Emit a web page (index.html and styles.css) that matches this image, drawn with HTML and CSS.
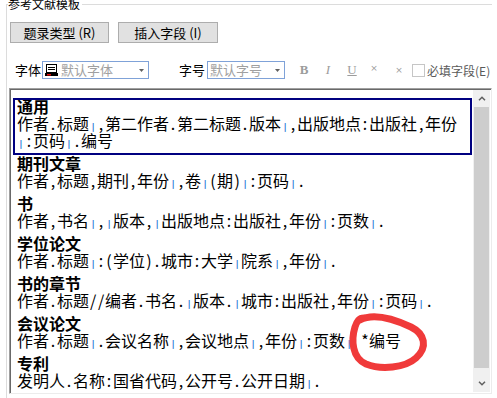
FILE: index.html
```html
<!DOCTYPE html>
<html lang="zh-CN">
<head>
<meta charset="utf-8">
<title>参考文献模板</title>
<link rel="stylesheet" href="styles.css">
</head>
<body>
<fieldset class="group">
  <legend class="group-title">参考文献模板</legend>
  <div class="actions">
    <button class="btn">题录类型 (R)</button>
    <button class="btn btn-wide">插入字段 (I)</button>
  </div>
  <div class="toolbar">
    <span class="label label-font">字体</span>
    <div class="combo combo-font">
      <svg class="combo-icon" viewBox="0 0 13 13" width="13" height="13">
        <rect x="1.5" y="0.5" width="10" height="8" fill="#fff" stroke="#000"/>
        <line x1="3" y1="3.5" x2="10" y2="3.5" stroke="#000"/>
        <line x1="3" y1="5.5" x2="10" y2="5.5" stroke="#000"/>
        <rect x="0" y="9" width="13" height="3" fill="#000"/>
        <rect x="2" y="10" width="4" height="1.5" fill="#e01010"/>
      </svg>
      <span class="combo-text">默认字体</span>
      <svg class="combo-arrow" viewBox="0 0 5 3" width="5" height="3"><path d="M0 0H5L2.5 3Z" fill="#606060"/></svg>
    </div>
    <span class="label label-size">字号</span>
    <div class="combo combo-size">
      <span class="combo-text">默认字号</span>
      <svg class="combo-arrow" viewBox="0 0 5 3" width="5" height="3"><path d="M0 0H5L2.5 3Z" fill="#606060"/></svg>
    </div>
    <span class="tool tool-bold">B</span>
    <span class="tool tool-italic">I</span>
    <span class="tool tool-under">U</span>
    <span class="tool tool-sup">×</span>
    <span class="tool tool-sub">×</span>
    <span class="check"></span>
    <span class="check-label">必填字段(E)</span>
  </div>
  <div class="list">
    <div class="entries">
      <div class="entry entry-selected">
        <div class="entry-name">通用</div>
        <div class="entry-fmt">作者<span class="p">.</span>标题<span class="s">|</span><span class="p">,</span>第二作者<span class="p">.</span>第二标题<span class="p">.</span>版本<span class="s">|</span><span class="p">,</span>出版地点<span class="p">:</span>出版社<span class="p">,</span>年份<br><span class="s">|</span><span class="p">:</span>页码<span class="s">|</span><span class="p">.</span>编号</div>
      </div>
      <div class="entry">
        <div class="entry-name">期刊文章</div>
        <div class="entry-fmt">作者<span class="p">,</span>标题<span class="p">,</span>期刊<span class="p">,</span>年份<span class="s">|</span><span class="p">,</span>卷<span class="s">|</span><span class="p">(</span>期<span class="p">)</span><span class="s">|</span><span class="p">:</span>页码<span class="s">|</span><span class="p">.</span></div>
      </div>
      <div class="entry">
        <div class="entry-name">书</div>
        <div class="entry-fmt">作者<span class="p">,</span>书名<span class="s">|</span><span class="p">,</span><span class="s">|</span>版本<span class="p">,</span><span class="s">|</span>出版地点<span class="p">:</span>出版社<span class="p">,</span>年份<span class="s">|</span><span class="p">:</span>页数<span class="s">|</span><span class="p">.</span></div>
      </div>
      <div class="entry">
        <div class="entry-name">学位论文</div>
        <div class="entry-fmt">作者<span class="p">.</span>标题<span class="s">|</span><span class="p">:</span><span class="p">(</span>学位<span class="p">)</span><span class="p">.</span>城市<span class="p">:</span>大学<span class="s">|</span>院系<span class="s">|</span><span class="p">,</span>年份<span class="s">|</span><span class="p">.</span></div>
      </div>
      <div class="entry">
        <div class="entry-name">书的章节</div>
        <div class="entry-fmt">作者<span class="p">.</span>标题<span class="p">/</span><span class="p">/</span>编者<span class="p">.</span>书名<span class="p">.</span><span class="s">|</span>版本<span class="p">.</span><span class="s">|</span>城市<span class="p">:</span>出版社<span class="p">,</span>年份<span class="s">|</span><span class="p">:</span>页码<span class="s">|</span><span class="p">.</span></div>
      </div>
      <div class="entry">
        <div class="entry-name">会议论文</div>
        <div class="entry-fmt">作者<span class="p">.</span>标题<span class="s">|</span><span class="p">.</span>会议名称<span class="s">|</span><span class="p">,</span>会议地点<span class="s">|</span><span class="p">,</span>年份<span class="s">|</span><span class="p">:</span>页数<span class="s">|</span><span class="p">&nbsp;</span><span class="p">*</span>编号</div>
      </div>
      <div class="entry">
        <div class="entry-name">专利</div>
        <div class="entry-fmt">发明人<span class="p">.</span>名称<span class="p">:</span>国省代码<span class="p">,</span>公开号<span class="p">.</span>公开日期<span class="s">|</span><span class="p">.</span></div>
      </div>
    </div>
    <div class="scrollbar">
      <div class="sb-btn"><svg viewBox="0 0 8 5" width="8" height="5"><polyline points="1,4.2 4,1.2 7,4.2" fill="none" stroke="#606060" stroke-width="1.5"/></svg></div>
      <div class="sb-thumb"></div>
      <div class="sb-track"></div>
      <div class="sb-btn"><svg viewBox="0 0 8 5" width="8" height="5"><polyline points="1,0.8 4,3.8 7,0.8" fill="none" stroke="#606060" stroke-width="1.5"/></svg></div>
    </div>
  </div>
</fieldset>
<svg class="annotation" viewBox="0 0 497 398" width="497" height="398">
  <path d="M360 320 C375 312 398 321 411 327 C425 334 428 347 416 358 C405 368 381 370 366 364 C352 358 351 340 355 327 C357 321 359 318 364 318" fill="none" stroke="#f03a3a" stroke-width="7" stroke-linecap="round" stroke-linejoin="round"/>
</svg>
</body>
</html>
```
FILE: styles.css
```css
html, body {
  margin: 0;
  padding: 0;
  overflow: hidden;
  background: #fff;
}
body {
  width: 497px;
  height: 398px;
  position: relative;
  font-family: "Noto Sans CJK SC", "Noto Sans", sans-serif;
  color: #000;
}
.group {
  margin: -2px 5px 0 6px;
  padding: 12px 0 0 2px;
  border: 0;
  border-top: 1px solid #dcdcdc;
  border-left: 1px solid #dcdcdc;
  min-width: 0;
  height: 430px;
  box-sizing: border-box;
}
.group-title {
  font-size: 12px;
  line-height: 12px;
  padding: 0 2px 0 0;
  margin-left: -1px;
}
.actions {
  display: flex;
  gap: 9px;
  margin-left: 1px;
}
.btn {
  width: 99px;
  height: 21px;
  box-sizing: border-box;
  background: #e1e1e1;
  border: 1px solid #adadad;
  padding: 0;
  font-family: "Noto Sans CJK SC", sans-serif;
  font-size: 13px;
  line-height: 19px;
  color: #000;
}
.btn-wide {
  width: 100px;
}
.toolbar {
  display: flex;
  align-items: center;
  height: 18px;
  margin-top: 18px;
  font-size: 13px;
}
.label {
  line-height: 18px;
}
.label-font {
  margin-left: 6px;
}
.label-size {
  margin-left: 30px;
}
.combo {
  display: flex;
  align-items: center;
  height: 18px;
  box-sizing: border-box;
  border: 1px solid #7fa2d8;
  background: #fff;
  padding: 0 4px 0 2px;
  color: #a0a0a0;
}
.combo-font {
  width: 107px;
  margin-left: 1px;
}
.combo-size {
  width: 78px;
  margin-left: 2px;
}
.combo-text {
  line-height: 16px;
}
.combo-icon {
  margin-right: 3px;
  flex: none;
}
.combo-arrow {
  margin-left: auto;
  flex: none;
}
.tool {
  width: 16px;
  text-align: center;
  color: #9c9c9c;
  font-family: "Liberation Serif", serif;
  font-size: 13px;
  line-height: 18px;
}
.tool-bold {
  font-weight: 700;
  margin-left: 11px;
}
.tool-italic {
  font-style: italic;
  margin-left: 8px;
}
.tool-under {
  text-decoration: underline;
  margin-left: 8px;
}
.tool-sup {
  font-family: "DejaVu Sans", sans-serif;
  font-size: 9px;
  margin-left: 6px;
  position: relative;
  top: -2px;
}
.tool-sub {
  font-family: "DejaVu Sans", sans-serif;
  font-size: 9px;
  margin-left: 9px;
}
.check {
  width: 13px;
  height: 13px;
  box-sizing: border-box;
  border: 1px solid #c6c6c6;
  background: #fff;
  margin-left: 5px;
}
.check-label {
  margin-left: 2px;
  font-size: 12px;
  color: #5a5a5a;
  white-space: nowrap;
}
.list {
  margin-top: 9px;
  height: 306px;
  box-sizing: border-box;
  border: 1px solid;
  border-color: #a0a0a0 #ececec #ececec #a0a0a0;
  box-shadow: inset 1px 1px 0 #696969;
  padding: 1px;
  display: flex;
  background: #fff;
}
.entries {
  flex: 1;
  overflow: hidden;
  padding-top: 8px;
}
.entry {
  margin: 0 1px 0 2px;
  padding: 0 4px 6px;
  font-size: 16px;
  line-height: 17px;
  white-space: nowrap;
}
.entry-name,
.entry-fmt {
  height: 17px;
}
.entry-selected .entry-fmt {
  height: 34px;
}
.entry-selected {
  outline: 2px solid #000080;
  outline-offset: -2px;
}
.entry-name {
  font-weight: 700;
}
.p {
  display: inline-block;
  width: 8px;
  text-align: center;
  line-height: 10px;
}
.s {
  display: inline-block;
  width: 8px;
  text-align: center;
  color: #2f80d8;
  font-family: "DejaVu Sans", sans-serif;
  font-weight: 700;
  font-size: 9px;
  line-height: 8px;
}
.scrollbar {
  width: 17px;
  flex: none;
  display: flex;
  flex-direction: column;
  background: #f0f0f0;
}
.sb-btn {
  height: 17px;
  display: flex;
  align-items: center;
  justify-content: center;
}
.sb-thumb {
  height: 261px;
  margin: 0 1px;
  background: #cdcdcd;
}
.sb-track {
  flex: 1;
}
.annotation {
  position: absolute;
  left: 0;
  top: 0;
  pointer-events: none;
}
```
